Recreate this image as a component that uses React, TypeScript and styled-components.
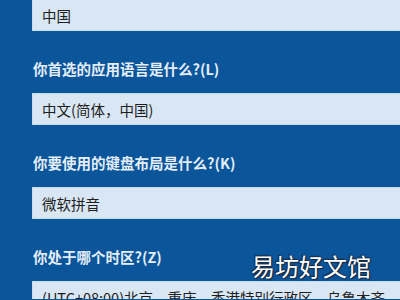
import React from "react";
import styled, { createGlobalStyle } from "styled-components";

const Global = createGlobalStyle`
  html, body { margin: 0; padding: 0; }
  body {
    width: 400px;
    height: 300px;
    overflow: hidden;
    background: #0b559b;
    font-family: "Noto Sans CJK SC", "Noto Sans", sans-serif;
  }
`;

const Page = styled.div`
  position: relative;
  width: 400px;
  height: 300px;
  overflow: hidden;
  background: #0b559b;
  padding-left: 32px;
  box-sizing: border-box;
  margin-top: -1px;
`;

const Stack = styled.div`
  display: flex;
  flex-direction: column;
`;

const Input = styled.div`
  height: 32px;
  box-sizing: border-box;
  background: #d9e6f3;
  border: 1px solid #c9dbec;
  border-right: none;
  padding: 0 9px;
  display: flex;
  align-items: center;
  font-size: 14.5px;
  color: #1e1e1e;
  white-space: nowrap;
  overflow: hidden;
`;

const Label = styled.div`
  padding: 28px 0 14px 1px;
  line-height: 20px;
  font-size: 14.5px;
  font-weight: 700;
  color: #e3eef8;
  white-space: nowrap;
`;

const Watermark = styled.div`
  position: absolute;
  left: 251px;
  top: 253px;
  font-size: 24px;
  line-height: 28px;
  color: #ffffff;
  text-shadow: 0 0 2px #1a2a40, 1px 1px 1px #1a2a40, -1px -1px 1px #1a2a40;
  white-space: nowrap;
`;

const fields = [
  { value: "中国", label: "你首选的应用语言是什么?(L)" },
  { value: "中文(简体，中国)", label: "你要使用的键盘布局是什么?(K)" },
  { value: "微软拼音", label: "你处于哪个时区?(Z)" },
  { value: "(UTC+08:00)北京，重庆，香港特别行政区，乌鲁木齐", label: "" },
];

export default function App() {
  return (
    <>
      <Global />
      <Page>
        <Stack>
          {fields.map((f, i) => (
            <React.Fragment key={i}>
              <Input>{f.value}</Input>
              {f.label && <Label>{f.label}</Label>}
            </React.Fragment>
          ))}
        </Stack>
        <Watermark>易坊好文馆</Watermark>
      </Page>
    </>
  );
}
